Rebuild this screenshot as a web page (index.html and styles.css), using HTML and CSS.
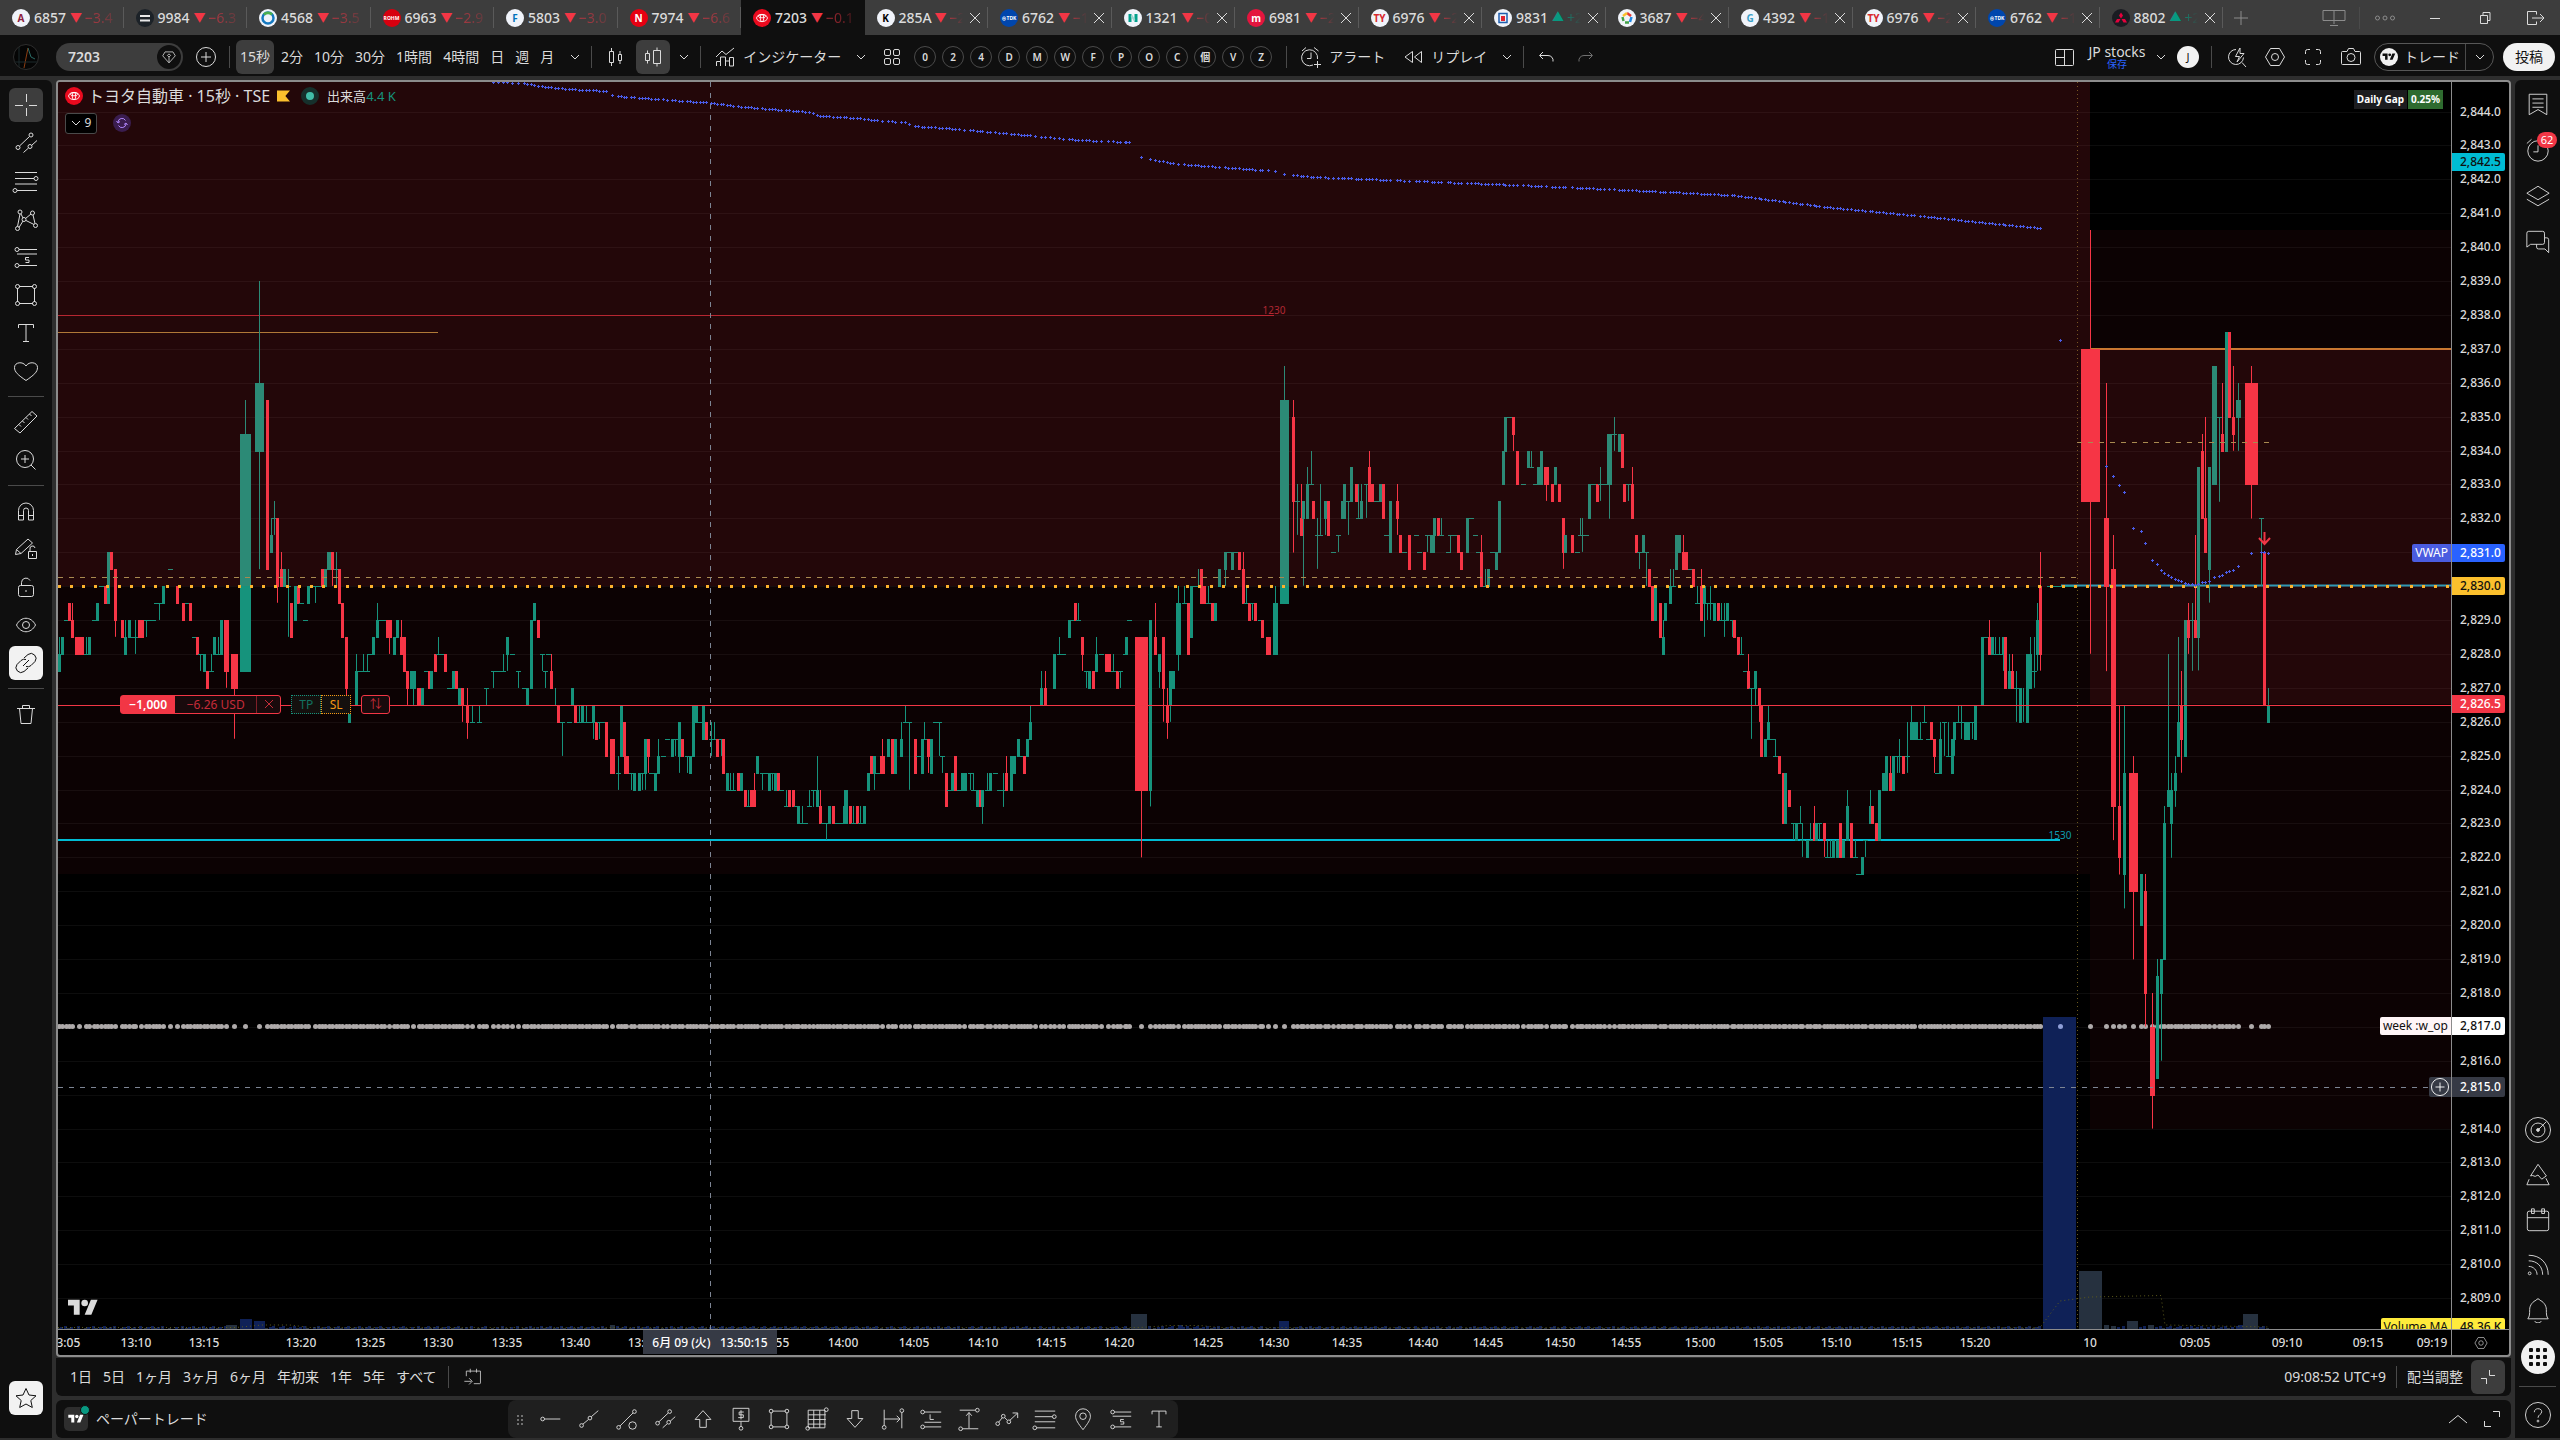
FILE: index.html
```html
<!DOCTYPE html>
<html lang="ja">
<head>
    <meta charset="UTF-8">
    <meta name="viewport" content="width=device-width, initial-scale=1.0">
    <title>7203 トヨタ自動車</title>
    <link rel="stylesheet" href="styles.css">
</head>
<body>
    <!-- アイコン定義 -->
    <svg class="sprite" aria-hidden="true">
        <symbol id="i-chevron" viewBox="0 0 10 10"><path d="M1 3l4 4 4-4"/></symbol>
        <symbol id="i-x" viewBox="0 0 10 10"><path d="M0 0l10 10M10 0L0 10"/></symbol>
        <symbol id="i-plus" viewBox="0 0 14 14"><path d="M7 0v14M0 7h14"/></symbol>
        <symbol id="i-pluscircle" viewBox="0 0 28 28"><circle cx="14" cy="14" r="9.5"/><path d="M14 9v10M9 14h10"/></symbol>
        <symbol id="i-monitor" viewBox="0 0 28 28"><path d="M3 6.500h22v10H3zM14 6.500V20M10 21.500h8"/></symbol>
        <symbol id="i-dots3" viewBox="0 0 28 28"><circle cx="6.500" cy="14" r="2"/><circle cx="14" cy="14" r="2"/><circle cx="21.500" cy="14" r="2"/></symbol>
        <symbol id="i-min" viewBox="0 0 28 28"><path d="M9 14.500h10"/></symbol>
        <symbol id="i-restore" viewBox="0 0 28 28"><path d="M9.500 11.500h7v8h-7zM12 11V8.500h7v8h-2.500"/></symbol>
        <symbol id="i-exit" viewBox="0 0 28 28"><path d="M15.500 7.500h-9v13h9M15.500 7.500v3M15.500 20.500v-3M11 14h12M19 10l4 4-4 4"/></symbol>
        <symbol id="i-gem" viewBox="0 0 28 28"><path d="M9 7.500h10l3 5-8 9-8-9zM14 21v-7M14 14l-2-2 2-2 2 2z"/></symbol>
        <symbol id="i-candles" viewBox="0 0 28 28"><path d="M8.500 8.500h4v11h-4zM10.500 5v3.500M10.500 19.500V23M17.500 11.500h3v6h-3zM19 8v3.500M19 17.500V21"/></symbol>
        <symbol id="i-volcandles" viewBox="0 0 28 28"><path d="M6.500 10.500h4v7h-4zM8.500 7.500v3M8.500 17.500v3M14.500 7.500h7v13h-7zM18 4.500v3M18 20.500v3"/></symbol>
        <symbol id="i-indicators" viewBox="0 0 28 28"><path d="M5.500 23V18.500h4V23M9.500 23v-9h5v9M14.500 23v-5h4v5M18.500 23V14.500h4V23zM5 14l6-6 4 3.500L23 5"/></symbol>
        <symbol id="i-grid4" viewBox="0 0 28 28"><rect x="6.500" y="6.500" width="6" height="6" rx="1.500"/><rect x="15.500" y="6.500" width="6" height="6" rx="1.500"/><rect x="6.500" y="15.500" width="6" height="6" rx="1.500"/><rect x="15.500" y="15.500" width="6" height="6" rx="1.500"/></symbol>
        <symbol id="i-alertadd" viewBox="0 0 28 28"><path d="M20.500 16a8 8 0 1 0-4.500 6M14 9.500v6h-4M5 8l4-3.500M17 4.500L21.500 8M20.500 18v7M17 21.500h7"/></symbol>
        <symbol id="i-replay" viewBox="0 0 28 28"><path d="M13.500 8.500L6 14l7.500 5.500zM22.500 8.500L15.500 14l7 5.500z"/></symbol>
        <symbol id="i-undo" viewBox="0 0 28 28"><path d="M10 9l-3.500 3.500L10 16M7 12.500h8a5 5 0 0 1 5 6"/></symbol>
        <symbol id="i-redo" viewBox="0 0 28 28"><path d="M18 9l3.500 3.500L18 16M21 12.500h-8a5 5 0 0 0-5 6"/></symbol>
        <symbol id="i-layout" viewBox="0 0 28 28"><rect x="5.500" y="6.500" width="18" height="16" rx="1"/><path d="M14.500 6.500v16M5.500 14.500h9"/></symbol>
        <symbol id="i-quick" viewBox="0 0 28 28"><path d="M13 6.500a7.500 7.500 0 1 0 7.500 8M19 19.500l4 4.500M17 5l-4.500 8.500h4L14 19l7-8.500h-4z"/></symbol>
        <symbol id="i-gear" viewBox="0 0 28 28"><path d="M9.500 5.500h9L23.500 14l-5 8.500h-9L4.500 14z"/><circle cx="14" cy="14" r="3.500"/></symbol>
        <symbol id="i-fullscreen" viewBox="0 0 28 28"><path d="M6.500 11V8.500a2 2 0 0 1 2-2H11M17 6.500h2.500a2 2 0 0 1 2 2V11M21.500 17v2.500a2 2 0 0 1-2 2H17M11 21.500H8.500a2 2 0 0 1-2-2V17"/></symbol>
        <symbol id="i-camera" viewBox="0 0 28 28"><path d="M5.500 8.500h4.500l1.500-3h5l1.500 3h4.500a1 1 0 0 1 1 1v11a1 1 0 0 1-1 1h-17a1 1 0 0 1-1-1v-11a1 1 0 0 1 1-1z"/><circle cx="14" cy="14.500" r="4"/></symbol>
        <symbol id="i-cross" viewBox="0 0 28 28"><path d="M14.500 3v8M14.500 17v8M3 14.500h8M17 14.500h8"/></symbol>
        <symbol id="i-trend" viewBox="0 0 28 28"><circle cx="6" cy="18.500" r="2"/><circle cx="19" cy="6" r="2"/><path d="M7.500 17L17.500 7.500M11.500 23.500l5-4.500M19.500 16.500l5.500-5"/><circle cx="18" cy="17.500" r="2"/></symbol>
        <symbol id="i-fib" viewBox="0 0 28 28"><path d="M3 5.500h22M3 11.500h19M3 17h22M5 23.500h20"/><circle cx="24" cy="11.500" r="2"/><circle cx="3" cy="23.500" r="2"/></symbol>
        <symbol id="i-pattern" viewBox="0 0 28 28"><circle cx="5.500" cy="23.500" r="2"/><circle cx="8" cy="7" r="2"/><circle cx="20.500" cy="8" r="2"/><circle cx="23.500" cy="20.500" r="2"/><circle cx="12" cy="14.500" r="2"/><path d="M5.500 21.500L8 9M9 9l2 4M13.500 13.500L19 9M21 10l2 8.500M14 15.500l8 4M7 22.500l4-6.500"/></symbol>
        <symbol id="i-forecast" viewBox="0 0 28 28"><path d="M7 6.500h18M5 11h20M7 22.500h18"/><circle cx="5" cy="6.500" r="2"/><circle cx="5" cy="22.500" r="2"/><path d="M17 14.500h-3.500v2.500H17v2.500h-3.500"/></symbol>
        <symbol id="i-rect" viewBox="0 0 28 28"><path d="M7 5.500h14M7 22.500h14M5.500 7v14M22.500 7v14"/><circle cx="5.500" cy="5.500" r="2"/><circle cx="22.500" cy="5.500" r="2"/><circle cx="5.500" cy="22.500" r="2"/><circle cx="22.500" cy="22.500" r="2"/></symbol>
        <symbol id="i-text" viewBox="0 0 28 28"><path d="M6.500 9V5.500h15V9M14 5.500v17M11 22.500h6"/></symbol>
        <symbol id="i-heart" viewBox="0 0 28 28"><path d="M14 23.500C6 18 2.500 15 2.500 10.500c0-5.500 8.500-6.500 11.500-1.500 3-5 11.500-4 11.500 1.500 0 4.500-3.500 7.500-11.500 13z"/></symbol>
        <symbol id="i-ruler" viewBox="0 0 28 28"><path d="M2.500 20.500L20 3.500l5 4.500L8 25zM7 16.500l2 2M10.500 13l2 2M14 9.500l2 2M17.500 6l2 2"/></symbol>
        <symbol id="i-zoom" viewBox="0 0 28 28"><circle cx="13" cy="13" r="8.500"/><path d="M19 19l4.500 4.500M13 9v8M9 13h8"/></symbol>
        <symbol id="i-magnet" viewBox="0 0 28 28"><path d="M6.500 23V13.500a7.500 7.500 0 0 1 15 0V23h-5v-9.500a2.500 2.500 0 0 0-5 0V23zM6.500 18.500h5M16.500 18.500h5"/></symbol>
        <symbol id="i-pencillock" viewBox="0 0 28 28"><path d="M3.500 19.500l1-5L16 4l4.500 4-11.500 10.500zM4.500 14.500L9 18.500M16.500 16.500h8v7h-8zM18 16.500v-2.500a2.500 2.500 0 0 1 5-1M20.500 19v2"/></symbol>
        <symbol id="i-lock" viewBox="0 0 28 28"><rect x="6.500" y="12.500" width="15" height="11" rx="2"/><path d="M9.500 12.500V9.500a4.500 4.500 0 0 1 8.500-2M14 17v2"/></symbol>
        <symbol id="i-eye" viewBox="0 0 28 28"><path d="M4.500 14C9 5 19 5 23.500 14 19 23 9 23 4.500 14z"/><circle cx="14" cy="14" r="3.500"/></symbol>
        <symbol id="i-link" viewBox="0 0 28 28"><path d="M12 9l4-3.500a5 5 0 0 1 7 7L19 16.500a5 5 0 0 1-5 1M16 19l-4 3.500a5 5 0 0 1-7-7L9 11.500a5 5 0 0 1 5-1M11 17l6-6"/></symbol>
        <symbol id="i-trash" viewBox="0 0 28 28"><path d="M5 8.500h18M10.500 8V5.500h7V8M7.500 8.500l1.500 15h10l1.500-15"/></symbol>
        <symbol id="i-star" viewBox="0 0 28 28"><path d="M14 4.500l3 6.500 7 .8-5.200 4.700 1.500 7L14 20l-6.300 3.500 1.500-7L4 11.800l7-.8z"/></symbol>
        <symbol id="i-watch" viewBox="0 0 28 28"><path d="M4.500 3.500h19v22L14 20l-9.500 5.500zM8 8.500h12M8 13h12M8 17.500h12"/></symbol>
        <symbol id="i-alarm" viewBox="0 0 28 28"><circle cx="14" cy="15" r="11"/><path d="M14 9v7h-5M2 7l5-4.500"/></symbol>
        <symbol id="i-layers" viewBox="0 0 28 28"><path d="M2 11l12-7.500L26 11l-12 7zM2 17.500l12 7 12-7"/></symbol>
        <symbol id="i-chat" viewBox="0 0 28 28"><path d="M2 19.500V4.500a2 2 0 0 1 2-2h15a2 2 0 0 1 2 2v10a2 2 0 0 1-2 2H6zM21.500 9.500h2a2 2 0 0 1 2 2v14l-4-4h-7a2 2 0 0 1-2-2v-3"/></symbol>
        <symbol id="i-radar" viewBox="0 0 28 28"><circle cx="14" cy="14" r="13.500"/><circle cx="14" cy="14" r="7.500"/><circle cx="14" cy="14" r="1.500" fill="currentColor"/><path d="M14 14l9-9"/></symbol>
        <symbol id="i-mountain" viewBox="0 0 28 28"><path d="M6 15L14 2.500 23 15l-5 3.500-4-4.500-3 1.500-3-1zM4.500 18.500L2 24.500h24l-3.500-7"/></symbol>
        <symbol id="i-calendar" viewBox="0 0 28 28"><rect x="2.500" y="4.500" width="23" height="21" rx="2"/><path d="M2.500 11.500h23M7 2h3v5H7zM18 2h3v5h-3z"/></symbol>
        <symbol id="i-feed" viewBox="0 0 28 28"><circle cx="5" cy="23" r="1.500"/><path d="M4 3.500c13 0 21 9 21 21M4 9.500c9 0 15 6 15 15M4 15.500c5 0 9 4 9 9"/></symbol>
        <symbol id="i-bell" viewBox="0 0 28 28"><path d="M3 23.500c2-2.500 2-5 2-10S9 4.500 12 3.500c.5-2 3.500-2 4 0 3 1 7 5 7 10s0 7.500 2 10zM10.500 26c1 2.500 6 2.500 7 0"/></symbol>
        <symbol id="i-help" viewBox="0 0 28 28"><circle cx="14" cy="14" r="13.500"/><path d="M10 11c0-5 8-5 8-.5 0 3-4 3-4 6.500"/><circle cx="14" cy="20.500" r="1"/></symbol>
        <symbol id="i-goto" viewBox="0 0 28 28"><path d="M5.500 13V6.500h18v15a1 1 0 0 1-1 1H15M10.500 3.500v5M18.500 3.500v5M3 19.500h9M9 15.500l4 4-4 4"/></symbol>
        <symbol id="i-shrink" viewBox="0 0 28 28"><path d="M15.500 7v5.500H21M7 15.500h5.500V21"/></symbol>
        <symbol id="i-expand" viewBox="0 0 28 28"><path d="M15 6.500h6.500V12M6.500 16v5.500H13"/></symbol>
        <symbol id="i-up" viewBox="0 0 28 28"><path d="M5 18l9-7.500 9 7.500"/></symbol>
        <symbol id="i-hray" viewBox="0 0 28 28"><circle cx="5" cy="14" r="2"/><path d="M7 14h17"/></symbol>
        <symbol id="i-line" viewBox="0 0 28 28"><circle cx="6" cy="21" r="2"/><circle cx="15" cy="13" r="2"/><path d="M7.500 19.500l6-5M16.500 11.500L24 5"/></symbol>
        <symbol id="i-lineshape" viewBox="0 0 28 28"><circle cx="5" cy="23" r="2"/><circle cx="22" cy="6" r="2"/><path d="M6.500 21.500L20.500 7.500"/><circle cx="20" cy="21" r="4"/></symbol>
        <symbol id="i-arrowup" viewBox="0 0 28 28"><path d="M14 5l8.500 9.500h-5V23h-7v-8.500h-5z"/></symbol>
        <symbol id="i-arrowdown" viewBox="0 0 28 28"><path d="M14 23l8.500-9.500h-5V5h-7v8.500h-5z"/></symbol>
        <symbol id="i-note" viewBox="0 0 28 28"><path d="M5.500 2.500h17v14h-17zM14 16.500V22M17 6.500h-5v3h4.500v3H11M14 4.500v10"/><circle cx="14" cy="24" r="2"/></symbol>
        <symbol id="i-table" viewBox="0 0 28 28"><path d="M4.500 4.500h18v19h-18zM4.500 9.500h19M4.500 14.500h19M4.500 19.500h19M10.500 4.500v19M17 4.500v19"/><circle cx="24" cy="4" r="2"/><circle cx="4" cy="24" r="2"/></symbol>
        <symbol id="i-daterange" viewBox="0 0 28 28"><path d="M4.500 4v17M23.500 7v17M4.500 14h17M18 10.500l3.500 3.500-3.500 3.500"/><circle cx="4.500" cy="23" r="2"/><circle cx="23.500" cy="5" r="2"/></symbol>
        <symbol id="i-long" viewBox="0 0 28 28"><path d="M7 6.500h18M7 17.500h18M7 22.500h18M13 9v5.500h4"/><circle cx="5" cy="6.500" r="2"/><circle cx="5" cy="22.500" r="2"/></symbol>
        <symbol id="i-pricerange" viewBox="0 0 28 28"><path d="M4 4.500h17M7 24.500h17M14 7v17M11 10.500L14 7l3 3.500"/><circle cx="23" cy="4.500" r="2"/><circle cx="5" cy="24.500" r="2"/></symbol>
        <symbol id="i-path" viewBox="0 0 28 28"><circle cx="4" cy="19" r="2"/><circle cx="10" cy="11" r="2"/><circle cx="16" cy="17" r="2"/><path d="M5 17.500L9 12.500M11.500 12.500l3 3M17 15.500L25 8M20 7.500h5.500V13"/></symbol>
        <symbol id="i-pin" viewBox="0 0 28 28"><path d="M14 25.500C9 19 6 15 6 11a8 8 0 0 1 16 0c0 4-3 8-8 14.500z"/><circle cx="14" cy="11" r="3.500"/></symbol>
        <symbol id="i-tv" viewBox="0 0 36 28"><path d="M14 22H7V11H0V4h14zM28 22h-8l7.500-18h8z" fill="currentColor" stroke="none"/><circle cx="20" cy="8" r="4" fill="currentColor" stroke="none"/></symbol>
        <symbol id="i-toyota" viewBox="0 0 20 20"><circle cx="10" cy="10" r="10" fill="#eb0a1e" stroke="none"/><ellipse cx="10" cy="10" rx="6" ry="4" stroke="#fff"/><ellipse cx="10" cy="10" rx="2" ry="4" stroke="#fff"/><ellipse cx="10" cy="8" rx="4" ry="1.800" stroke="#fff"/></symbol>
        <symbol id="i-9984" viewBox="0 0 18 18"><circle cx="9" cy="9" r="9" fill="#1c2228" stroke="none"/><path d="M4 7h10M4 11.500h10" stroke="#e8e8e8" stroke-width="2"/></symbol>
        <symbol id="i-4568" viewBox="0 0 18 18"><circle cx="9" cy="9" r="9" fill="#f0f3fa" stroke="none"/><circle cx="9" cy="9" r="5.500" stroke="#1679c0" stroke-width="2.500"/><path d="M5 5.500a6 6 0 0 1 8 0" stroke="#4caf50" stroke-width="3"/></symbol>
        <symbol id="i-1321" viewBox="0 0 18 18"><circle cx="9" cy="9" r="9" fill="#f0f3fa" stroke="none"/><path d="M6 5v8M12 5v8" stroke="#00a08c" stroke-width="3"/><path d="M7.500 6.500l3 5" stroke="#9bd6cf" stroke-width="2"/></symbol>
        <symbol id="i-9831" viewBox="0 0 18 18"><circle cx="9" cy="9" r="9" fill="#f0f3fa" stroke="none"/><rect x="5" y="4.500" width="8" height="9" stroke="#1f5fae" stroke-width="1.500"/><rect x="7" y="7" width="4" height="5" fill="#e0242f" stroke="none"/></symbol>
        <symbol id="i-3687" viewBox="0 0 18 18"><circle cx="9" cy="9" r="9" fill="#f0f3fa" stroke="none"/><path d="M9 4l4 3" stroke="#e53935" stroke-width="2.500"/><path d="M13.500 8l-1.500 5" stroke="#1e88e5" stroke-width="2.500"/><path d="M11 13.500H7" stroke="#43a047" stroke-width="2.500"/><path d="M5.500 12L4.500 8" stroke="#43a047" stroke-width="2.500"/><path d="M5 7l4-3" stroke="#fbc02d" stroke-width="2.500"/></symbol>
        <symbol id="i-8802" viewBox="0 0 18 18"><circle cx="9" cy="9" r="9" fill="#1a1c22" stroke="none"/><path d="M9 3.500l2 3-2 3-2-3zM8.500 10l-2 3.500H3L5 10zM9.500 10l2 3.500H15L13 10z" fill="#e6003c" stroke="none"/></symbol>
    </svg>

    <header class="topbar">
        <nav class="tabs" id="tabs"></nav>
        <div class="window-controls">
            <button class="wc wc-add" aria-label="新しいタブ"><svg class="ic14"><use href="#i-plus"/></svg></button>
            <button class="wc wc-dim" aria-label="モニター"><svg class="ic"><use href="#i-monitor"/></svg></button>
            <span class="vsep"></span>
            <button class="wc wc-dim" aria-label="メニュー"><svg class="ic"><use href="#i-dots3"/></svg></button>
            <button class="wc" aria-label="最小化"><svg class="ic"><use href="#i-min"/></svg></button>
            <button class="wc" aria-label="元に戻す"><svg class="ic"><use href="#i-restore"/></svg></button>
            <button class="wc" aria-label="終了"><svg class="ic"><use href="#i-exit"/></svg></button>
        </div>
    </header>

    <div class="toolbar">
        <button class="avatar" aria-label="メニュー"><svg viewBox="0 0 26 26" class="ic26"><path d="M11 24l2-10 2-10" stroke="#8a3c12"/><path d="M15 4l3 9 4 2" stroke="#2a6a64"/><path d="M0 18h26M6 0v26" stroke="#1d2a2c"/></svg></button>
        <div class="search">
            <input type="text" value="7203" aria-label="シンボル検索">
            <button class="gem" aria-label="市場"><svg class="ic22"><use href="#i-gem"/></svg></button>
        </div>
        <button class="tb-plus" aria-label="比較"><svg class="ic"><use href="#i-pluscircle"/></svg></button>
        <span class="vsep first"></span>
        <div class="group intervals">
            <button class="tb active">15秒</button>
            <button class="tb">2分</button>
            <button class="tb">10分</button>
            <button class="tb">30分</button>
            <button class="tb">1時間</button>
            <button class="tb">4時間</button>
            <button class="tb">日</button>
            <button class="tb">週</button>
            <button class="tb">月</button>
            <button class="tb-chev" aria-label="時間足"><svg class="ic10"><use href="#i-chevron"/></svg></button>
        </div>
        <span class="vsep"></span>
        <div class="group">
            <button class="tb-icon" aria-label="ローソク足"><svg class="ic"><use href="#i-candles"/></svg></button>
            <button class="tb-icon active" aria-label="出来高ローソク足"><svg class="ic"><use href="#i-volcandles"/></svg></button>
            <button class="tb-chev" aria-label="チャートタイプ"><svg class="ic10"><use href="#i-chevron"/></svg></button>
        </div>
        <span class="vsep"></span>
        <div class="group">
            <button class="tb with-icon"><svg class="ic"><use href="#i-indicators"/></svg>インジケーター</button>
            <button class="tb-chev" aria-label="お気に入り"><svg class="ic10"><use href="#i-chevron"/></svg></button>
            <button class="tb-icon" aria-label="テンプレート"><svg class="ic"><use href="#i-grid4"/></svg></button>
        </div>
        <div class="rounds">
            <button>0</button><button>2</button><button>4</button><button>D</button><button>M</button><button>W</button><button>F</button><button>P</button><button>O</button><button>C</button><button>個</button><button>V</button><button>Z</button>
        </div>
        <span class="vsep"></span>
        <div class="group">
            <button class="tb with-icon"><svg class="ic"><use href="#i-alertadd"/></svg>アラート</button>
            <button class="tb with-icon"><svg class="ic"><use href="#i-replay"/></svg>リプレイ</button>
            <button class="tb-chev" aria-label="リプレイ設定"><svg class="ic10"><use href="#i-chevron"/></svg></button>
        </div>
        <span class="vsep"></span>
        <div class="group">
            <button class="tb-icon" aria-label="元に戻す"><svg class="ic"><use href="#i-undo"/></svg></button>
            <button class="tb-icon dim" aria-label="やり直す"><svg class="ic"><use href="#i-redo"/></svg></button>
        </div>
        <div class="toolbar-right">
            <button class="tb-wide" aria-label="レイアウト"><svg class="ic"><use href="#i-layout"/></svg></button>
            <button class="layout-name"><span>JP stocks</span><span class="save">保存</span></button>
            <button class="tb-chev" aria-label="レイアウト管理"><svg class="ic10"><use href="#i-chevron"/></svg></button>
            <span class="user">J</span>
            <span class="vsep"></span>
            <button class="tb-wide" aria-label="クイック検索"><svg class="ic"><use href="#i-quick"/></svg></button>
            <button class="tb-wide" aria-label="設定"><svg class="ic"><use href="#i-gear"/></svg></button>
            <button class="tb-wide" aria-label="全画面"><svg class="ic"><use href="#i-fullscreen"/></svg></button>
            <button class="tb-wide" aria-label="スナップショット"><svg class="ic"><use href="#i-camera"/></svg></button>
            <div class="trade">
                <button class="trade-main"><span class="tv-dot"><svg class="ic12"><use href="#i-tv"/></svg></span>トレード</button>
                <button class="trade-chev" aria-label="ブローカー"><svg class="ic10"><use href="#i-chevron"/></svg></button>
            </div>
            <button class="publish">投稿</button>
        </div>
    </div>

    <div class="workspace">
        <aside class="left-tools">
            <button class="active" aria-label="カーソル"><svg class="ic"><use href="#i-cross"/></svg></button>
            <button aria-label="トレンドライン"><svg class="ic"><use href="#i-trend"/></svg></button>
            <button aria-label="フィボナッチ"><svg class="ic"><use href="#i-fib"/></svg></button>
            <button aria-label="パターン"><svg class="ic"><use href="#i-pattern"/></svg></button>
            <button aria-label="予測"><svg class="ic"><use href="#i-forecast"/></svg></button>
            <button aria-label="図形"><svg class="ic"><use href="#i-rect"/></svg></button>
            <button aria-label="テキスト"><svg class="ic"><use href="#i-text"/></svg></button>
            <button aria-label="アイコン"><svg class="ic"><use href="#i-heart"/></svg></button>
            <hr>
            <button aria-label="計測"><svg class="ic"><use href="#i-ruler"/></svg></button>
            <button aria-label="ズーム"><svg class="ic"><use href="#i-zoom"/></svg></button>
            <hr>
            <button aria-label="マグネット"><svg class="ic"><use href="#i-magnet"/></svg></button>
            <button aria-label="描画モード"><svg class="ic"><use href="#i-pencillock"/></svg></button>
            <button aria-label="ロック"><svg class="ic"><use href="#i-lock"/></svg></button>
            <button aria-label="表示"><svg class="ic"><use href="#i-eye"/></svg></button>
            <button class="inverse" aria-label="同期"><svg class="ic"><use href="#i-link"/></svg></button>
            <hr>
            <button aria-label="削除"><svg class="ic"><use href="#i-trash"/></svg></button>
            <button class="inverse fav" aria-label="お気に入り"><svg class="ic"><use href="#i-star"/></svg></button>
        </aside>

        <main class="center">
            <section class="chart">
                <div class="plot" id="plot">
                    <svg id="canvas" viewBox="58 82 2393 1247" preserveAspectRatio="none"></svg>
                    <div class="legend">
                        <div class="legend-row">
                            <svg class="ic18"><use href="#i-toyota"/></svg>
                            <span class="symbol">トヨタ自動車 · 15秒 · TSE</span>
                            <svg class="flag" viewBox="0 0 14 12"><path d="M0 0h14l-5 6 5 6H0z" fill="#fbc02d" stroke="none"/></svg>
                            <span class="market"></span>
                            <span class="vol">出来高<b>4.4 K</b></span>
                        </div>
                        <div class="legend-row">
                            <button class="fold"><svg class="ic10"><use href="#i-chevron"/></svg>9</button>
                            <span class="sync"><svg class="ic18" viewBox="0 0 18 18"><path d="M5 8a4 4 0 0 1 7.500-1.500M13 10a4 4 0 0 1-7.500 1.500M3.500 7l1.500 2 2-1.500M14.500 11L13 9l-2 1.500"/></svg></span>
                        </div>
                    </div>
                    <div class="gap"><span>Daily Gap</span><span class="gap-value">0.25%</span></div>
                    <div class="position">
                        <div class="pos-box"><span class="qty">−1,000</span><span class="pnl">−6.26 USD</span><button aria-label="決済"><svg class="ic8"><use href="#i-x"/></svg></button></div>
                        <div class="brackets"><button class="tp">TP</button><button class="sl">SL</button></div>
                        <button class="reverse">⇅</button>
                    </div>
                    <svg class="watermark"><use href="#i-tv"/></svg>
                </div>
                <div class="price-axis" id="prices"></div>
                <div class="time-axis" id="times"></div>
                <button class="axis-gear" aria-label="スケール設定"><svg class="ic18"><use href="#i-gear"/></svg></button>
            </section>

            <section class="range-bar">
                <button>1日</button><button>5日</button><button>1ヶ月</button><button>3ヶ月</button><button>6ヶ月</button><button>年初来</button><button>1年</button><button>5年</button><button>すべて</button>
                <span class="vsep"></span>
                <button class="goto" aria-label="日付へ移動"><svg class="ic22"><use href="#i-goto"/></svg></button>
                <div class="range-right">
                    <button>09:08:52 UTC+9</button>
                    <span class="vsep"></span>
                    <button>配当調整</button>
                    <button class="shrink" aria-label="縮小"><svg class="ic"><use href="#i-shrink"/></svg></button>
                </div>
            </section>

            <footer class="footer">
                <button class="paper"><span class="paper-logo"><svg class="ic16"><use href="#i-tv"/></svg></span>ペーパートレード</button>
                <div class="draw-bar">
                    <span class="grip"></span>
                    <button aria-label="水平レイ"><svg class="ic"><use href="#i-hray"/></svg></button>
                    <button aria-label="ライン"><svg class="ic"><use href="#i-line"/></svg></button>
                    <button aria-label="ラインと図形"><svg class="ic"><use href="#i-lineshape"/></svg></button>
                    <button aria-label="チャネル"><svg class="ic"><use href="#i-trend"/></svg></button>
                    <button aria-label="上矢印"><svg class="ic"><use href="#i-arrowup"/></svg></button>
                    <button aria-label="価格ノート"><svg class="ic"><use href="#i-note"/></svg></button>
                    <button aria-label="長方形"><svg class="ic"><use href="#i-rect"/></svg></button>
                    <button aria-label="表"><svg class="ic"><use href="#i-table"/></svg></button>
                    <button aria-label="下矢印"><svg class="ic"><use href="#i-arrowdown"/></svg></button>
                    <button aria-label="日付範囲"><svg class="ic"><use href="#i-daterange"/></svg></button>
                    <button aria-label="ロング"><svg class="ic"><use href="#i-long"/></svg></button>
                    <button aria-label="価格範囲"><svg class="ic"><use href="#i-pricerange"/></svg></button>
                    <button aria-label="パス"><svg class="ic"><use href="#i-path"/></svg></button>
                    <button aria-label="リトレースメント"><svg class="ic"><use href="#i-fib"/></svg></button>
                    <button aria-label="ピン"><svg class="ic"><use href="#i-pin"/></svg></button>
                    <button aria-label="ショート"><svg class="ic"><use href="#i-forecast"/></svg></button>
                    <button aria-label="テキスト"><svg class="ic"><use href="#i-text"/></svg></button>
                </div>
                <div class="footer-right">
                    <button aria-label="開く"><svg class="ic"><use href="#i-up"/></svg></button>
                    <button aria-label="最大化"><svg class="ic"><use href="#i-expand"/></svg></button>
                </div>
            </footer>
        </main>

        <aside class="right-tools">
            <button aria-label="ウォッチリスト"><svg class="ic"><use href="#i-watch"/></svg></button>
            <button aria-label="アラート"><svg class="ic"><use href="#i-alarm"/></svg><span class="badge">62</span></button>
            <button aria-label="オブジェクトツリー"><svg class="ic"><use href="#i-layers"/></svg></button>
            <button aria-label="チャット"><svg class="ic"><use href="#i-chat"/></svg></button>
            <div class="right-bottom">
                <button aria-label="スクリーナー"><svg class="ic"><use href="#i-radar"/></svg></button>
                <button aria-label="パイン"><svg class="ic"><use href="#i-mountain"/></svg></button>
                <button aria-label="カレンダー"><svg class="ic"><use href="#i-calendar"/></svg></button>
                <button aria-label="ニュース"><svg class="ic"><use href="#i-feed"/></svg></button>
                <button aria-label="通知"><svg class="ic"><use href="#i-bell"/></svg></button>
                <button class="apps" aria-label="アプリ"><span></span><span></span><span></span><span></span><span></span><span></span><span></span><span></span><span></span></button>
                <hr>
                <button aria-label="ヘルプ"><svg class="ic"><use href="#i-help"/></svg></button>
            </div>
        </aside>
    </div>

    <script src="chart.js"></script>
</body>
</html>
```
FILE: styles.css
```css
* { box-sizing: border-box; }
html, body { height: 100%; }
body {
    margin: 0;
    padding-bottom: 2px;
    display: flex;
    flex-direction: column;
    background: #2e2e2e;
    color: #dbdbdb;
    font-family: "Noto Sans", "Noto Sans CJK JP", sans-serif;
    font-size: 14px;
    line-height: 20px;
    overflow: hidden;
}
button {
    background: none;
    border: none;
    padding: 0;
    margin: 0;
    color: inherit;
    font: inherit;
    white-space: nowrap;
    cursor: pointer;
    display: flex;
    align-items: center;
    justify-content: center;
}
svg { fill: none; stroke: currentColor; display: block; flex: none; }
.sprite { position: absolute; width: 0; height: 0; }
.ic { width: 28px; height: 28px; }
.ic26 { width: 26px; height: 26px; }
.ic22 { width: 22px; height: 22px; }
.ic18 { width: 18px; height: 18px; }
.ic16 { width: 16px; height: 12px; }
.ic14 { width: 14px; height: 14px; }
.ic12 { width: 14px; height: 10px; }
.ic10 { width: 10px; height: 10px; }
.ic8 { width: 8px; height: 8px; }
.vsep { width: 1px; height: 22px; background: #4a4a4a; flex: none; margin: 0 6px; }

/* タブ */
.topbar { display: flex; height: 35px; background: #3d3d3d; flex: none; }
.tabs { flex: 1; display: flex; min-width: 0; }
.tab {
    flex: 1 1 0;
    min-width: 0;
    display: flex;
    align-items: center;
    padding-left: 12px;
    color: #dbdbdb;
    text-decoration: none;
    position: relative;
    overflow: hidden;
}
.tab::after {
    content: "";
    position: absolute;
    right: 0;
    top: 7px;
    height: 21px;
    border-right: 1px solid #5a5a5a;
}
.tab.current { background: #0f0f0f; }
.tab.current::after { display: none; }
.tab .logo {
    width: 18px;
    height: 18px;
    border-radius: 50%;
    font-size: 10px;
    font-weight: 700;
    line-height: 18px;
    text-align: center;
    overflow: hidden;
    flex: none;
}
.tab .logo.small { font-size: 5px; }
.tab .code { margin-left: 4px; width: 35px; font-weight: 500; flex: none; }
.tab .arrow { color: #f23645; font-size: 12px; width: 14px; flex: none; text-align: center; }
.tab .arrow.up { color: #089981; }
.tab .pct {
    color: #f23645;
    flex: 1;
    margin-left: 2px;
    overflow: hidden;
    opacity: 0.7;
    -webkit-mask-image: linear-gradient(90deg, #000, transparent);
    mask-image: linear-gradient(90deg, #000, transparent);
}
.tab .pct.up { color: #089981; }
.tab button { width: 24px; margin-right: 1px; flex: none; }
.window-controls { display: flex; align-items: center; width: 337px; flex: none; }
.wc { width: 50px; height: 35px; flex: none; }
.wc-add { width: 36px; color: #8c8c8c; margin-right: auto; }
.wc-dim { color: #8c8c8c; }
.window-controls .vsep { margin: 0; }

/* ツールバー */
.toolbar {
    display: flex;
    align-items: center;
    height: 41px;
    flex: none;
    background: #0f0f0f;
    padding: 3px 5px 0 13px;
    margin-bottom: 4px;
}
.avatar { width: 26px; height: 26px; border-radius: 50%; overflow: hidden; background: #050505; border: 1px solid #2e2e2e; }
.search {
    display: flex;
    align-items: center;
    width: 127px;
    height: 28px;
    margin-left: 17px;
    border-radius: 14px;
    background: #3d3d3d;
    padding: 0 2px 0 12px;
}
.search input {
    flex: 1;
    min-width: 0;
    background: none;
    border: none;
    outline: none;
    padding: 0;
    color: #dbdbdb;
    font: inherit;
    font-weight: 600;
}
.gem { width: 24px; height: 24px; border-radius: 50%; background: #0f0f0f; }
.tb-plus { width: 46px; }
.vsep.first { margin-left: 0; }
.group { display: flex; align-items: center; gap: 4px; }
.intervals { gap: 3px; }
.tb { height: 34px; padding: 0 4px; border-radius: 6px; }
.tb-icon { width: 34px; height: 34px; border-radius: 6px; }
.tb-wide { width: 38px; height: 34px; }
.tb-chev { width: 20px; height: 34px; }
.intervals .tb-chev { margin-left: 4px; }
.tb.active, .tb-icon.active { background: #3d3d3d; }
.with-icon { gap: 4px; padding-right: 6px; }
.dim { color: #707070; }
.rounds { display: flex; gap: 6px; margin: 0 8px 0 5px; }
.rounds button {
    width: 22px;
    height: 22px;
    border: 1px solid #4a4a4a;
    border-radius: 50%;
    font-size: 10px;
    font-weight: 600;
}
.toolbar-right { display: flex; align-items: center; margin-left: auto; }
.layout-name { flex-direction: column; width: 68px; line-height: 13px; }
.layout-name .save { color: #2962ff; font-size: 10px; line-height: 12px; }
.user {
    width: 22px;
    height: 22px;
    border-radius: 50%;
    background: #f2f2f2;
    color: #0f0f0f;
    font-size: 11px;
    line-height: 22px;
    text-align: center;
    margin: 0 6px;
}
.trade { display: flex; height: 28px; width: 120px; border: 1px solid #575757; border-radius: 14px; margin-left: 4px; }
.trade-main { flex: 1; gap: 6px; }
.tv-dot { width: 18px; height: 18px; border-radius: 50%; background: #f2f2f2; color: #0f0f0f; display: flex; align-items: center; justify-content: center; }
.trade-chev { width: 28px; border-left: 1px solid #4a4a4a; }
.publish { width: 52px; height: 28px; border-radius: 14px; background: #f2f2f2; color: #0f0f0f; margin-left: 9px; }

/* ワークスペース */
.workspace { flex: 1; min-height: 0; display: flex; gap: 4px; }
.left-tools {
    width: 52px;
    flex: none;
    background: #0f0f0f;
    border-top-right-radius: 6px;
    padding: 8px 9px 23px;
    display: flex;
    flex-direction: column;
    gap: 4px;
}
.left-tools button { height: 34px; border-radius: 6px; flex: none; }
.left-tools .active { background: #3d3d3d; }
.left-tools .inverse { background: #f2f2f2; color: #0f0f0f; }
.left-tools .fav { margin-top: auto; }
.left-tools hr { width: 36px; margin: 4px -1px; }
hr { border: none; height: 1px; background: #4a4a4a; flex: none; }
.right-tools {
    width: 45px;
    flex: none;
    background: #0f0f0f;
    border-top-left-radius: 6px;
    padding: 5px 4px 4px;
    display: flex;
    flex-direction: column;
    gap: 8px;
}
.right-tools .ic { width: 26px; height: 26px; }
.right-tools button { height: 38px; position: relative; flex: none; }
.badge {
    position: absolute;
    top: 1px;
    right: -1px;
    min-width: 20px;
    height: 16px;
    border-radius: 8px;
    background: #f23645;
    color: #fff;
    font-size: 11px;
    line-height: 16px;
}
.right-bottom { margin-top: auto; display: flex; flex-direction: column; gap: 7px; }
.right-bottom hr { width: 100%; margin: 2px 0; }
.right-tools .apps {
    width: 34px;
    height: 34px;
    margin: 4px 0 3px 2px;
    border-radius: 50%;
    background: #f2f2f2;
    display: grid;
    grid-template-columns: repeat(3, 4px);
    gap: 3px;
    align-content: center;
    justify-content: center;
}
.apps span { width: 4px; height: 4px; background: #0f0f0f; border-radius: 1px; }
.center { flex: 1; min-width: 0; display: flex; flex-direction: column; }

/* チャート */
.chart {
    flex: 1;
    min-height: 0;
    display: grid;
    grid-template-columns: 1fr 58px;
    grid-template-rows: 1fr 26px;
    background: #000;
    border: 2px solid #8c8c8c;
    border-radius: 4px;
    overflow: hidden;
}
.plot { position: relative; min-height: 0; overflow: hidden; }
#canvas { position: absolute; width: 100%; height: 100%; stroke: none; }
.price-axis { position: relative; border-left: 1px solid #8c8c8c; overflow: hidden; font-size: 12px; }
.time-axis { position: relative; border-top: 1px solid #8c8c8c; overflow: hidden; font-size: 12px; font-weight: 500; }
.axis-gear { border-left: 1px solid #8c8c8c; border-top: 1px solid #8c8c8c; }
.price, .tag {
    position: absolute;
    left: 0;
    width: 53px;
    padding-left: 8px;
    height: 18px;
    margin-top: -9px;
    line-height: 18px;
    border-radius: 0 2px 2px 0;
    font-weight: 500;
}
.tag { color: #fff; }
.tag-cyan { background: #00bcd4; color: #0f0f0f; }
.tag-blue { background: #2962ff; }
.tag-amber { background: #fbc02d; color: #0f0f0f; }
.tag-red { background: #f23645; }
.tag-white { background: #fff; color: #0f0f0f; }
.tag-gray { background: #363a45; height: 20px; margin-top: -10px; line-height: 20px; }
.tag-yellow { background: #ffeb3b; color: #0f0f0f; }
.side {
    position: absolute;
    right: 0;
    height: 18px;
    margin-top: -9px;
    padding: 0 3px;
    font-size: 12px;
    line-height: 18px;
    border-radius: 2px 0 0 2px;
}
.side-vwap { background: #4a5ce0; color: #fff; }
.side-week { background: #fff5f7; color: #0f0f0f; }
.side-vol { background: #ffeb3b; color: #0f0f0f; }
.side-add { background: #363a45; color: #fff; height: 20px; margin-top: -10px; padding: 0 2px; display: flex; align-items: center; }
.level { position: absolute; width: 40px; margin: -13px 0 0 -20px; text-align: center; font-size: 10px; line-height: 12px; }
.level-high { color: #b22833; }
.level-low { color: #0f9bb0; }
.time { position: absolute; top: 3px; width: 60px; margin-left: -30px; text-align: center; }
.time-cursor {
    position: absolute;
    top: 0;
    height: 24px;
    width: 134px;
    margin-left: -67px;
    line-height: 26px;
    background: #363a45;
    color: #fff;
    text-align: center;
    white-space: pre;
}

.legend { position: absolute; left: 7px; top: 3px; display: flex; flex-direction: column; gap: 5px; }
.legend-row { display: flex; align-items: center; height: 22px; }
.symbol { font-size: 16px; margin: 0 7px 0 5px; }
.flag { width: 13px; height: 12px; }
.market { width: 18px; height: 18px; border-radius: 50%; background: #42bda8; border: 5px solid #16302c; margin: 0 8px 0 11px; }
.vol { font-size: 13px; }
.vol b { font-weight: 400; color: #16937c; }
.fold { width: 32px; height: 21px; gap: 4px; background: #000; border: 1px solid #4a4a4a; border-radius: 3px; font-size: 12px; }
.sync { margin-left: 16px; color: #b388ff; background: #3a1d4e; border-radius: 50%; }
.gap { position: absolute; right: 8px; top: 8px; display: flex; gap: 1px; font-size: 10px; font-weight: 700; line-height: 19px; color: #fff; }
.gap span { background: #1c1c1f; padding: 0 3px; }
.gap .gap-value { background: #2e6b2f; }
.position { position: absolute; left: 2.6%; top: 50%; margin-top: -11px; display: flex; align-items: center; gap: 10px; font-size: 12px; line-height: 17px; }
.pos-box, .reverse { display: flex; border: 1px solid #f23645; border-radius: 3px; background: #190a0c; color: #c62c3a; }
.qty { background: #f23645; color: #fff; font-weight: 600; width: 54px; text-align: center; }
.pnl { width: 81px; text-align: center; }
.pos-box button { width: 24px; border-left: 1px solid #801f28; color: #f23645; }
.brackets { display: flex; background: #14100e; }
.brackets button { width: 30px; border: 1px dotted #16937c; color: #12705f; line-height: 17px; }
.brackets .sl { border-color: #f59714; color: #f59714; }
.reverse { width: 29px; height: 19px; }
.watermark { position: absolute; left: 10px; bottom: 9px; width: 30px; height: 24px; color: #dbdbdb; }

/* 下部バー */
.range-bar {
    display: flex;
    align-items: center;
    gap: 11px;
    height: 38px;
    margin-top: 1px;
    padding: 0 6px 0 14px;
    background: #0f0f0f;
    border-radius: 0 0 6px 6px;
    flex: none;
}
.goto { margin-left: 2px; }
.range-bar .vsep { margin: 0; }
.range-right { display: flex; align-items: center; gap: 10px; margin-left: auto; }
.range-right .shrink { width: 34px; height: 34px; border-radius: 6px; background: #3d3d3d; margin-left: -2px; }
.footer {
    display: flex;
    align-items: center;
    height: 38px;
    margin-top: 4px;
    padding: 0 5px 0 8px;
    background: #0f0f0f;
    border-radius: 6px;
    position: relative;
    flex: none;
}
.paper { gap: 8px; }
.paper-logo { width: 24px; height: 24px; border-radius: 5px; background: #2e2e2e; color: #fff; display: flex; align-items: center; justify-content: center; position: relative; }
.paper-logo::after { content: ""; position: absolute; right: -2px; top: -2px; width: 8px; height: 8px; border-radius: 50%; background: #089981; border: 1px solid #0f0f0f; }
.draw-bar { display: flex; align-items: center; height: 38px; padding: 0 0 0 8px; background: #1f1f1f; border-radius: 8px; margin-left: 300px; }
.draw-bar button { width: 38px; height: 34px; }
.draw-bar .ic { width: 26px; height: 26px; }
.grip { width: 8px; height: 11px; margin-right: 8px; background: radial-gradient(circle, #707070 1px, transparent 1px) 0 0 / 4px 4px; }
.footer-right { display: flex; gap: 6px; margin-left: auto; }
```
FILE: chart.js
```js
const NS = 'http://www.w3.org/2000/svg';
const VIEW = { x: 58, y: 82, w: 2393, h: 1247 };
const canvas = document.getElementById('canvas');
const plot = document.getElementById('plot');

// 価格 → y座標
const py = p => 111.5 + (44 - p) * 33.9;

// x, 始値, 終値, [高値, 安値, 幅]  (価格は 2800 を引いた値)
const raw = `
59 27.5 28 28.5 27.5,62 28 28.5,66 29 29,69 29.5 29,72 29 28.5 29.5 28.5,79 28.5 28 28.5 28 9,86 28 28 28.5 28,89 28 28.5,94 29 29,97 29 29.5,101 30 30,105 30 29.5,108 29.5 31,111 31 30.5,115 30.5 29 30.5 28.5,122 29 28.5,125 28 28.5 29 28,129 28.5 29,133 28.5 28.5,135 28.5 28.5 29 28,141 29 28.5 29 28.5 6,146 29 29 29 28.5,149 29 29,153 29 29,156 29.5 29.5,159 29.5 29.5 29.5 29,163 29.5 30,170 30.5 30.5,177 30 29.5,183 29.5 29,187 29.5 29.5,190 29.5 29,194 28.5 28.5,197 28.5 28,200 28 28 28 27.5,204 27.5 28,207 27.5 27,211 27.5 27.5 28 27.5,214 28 28.5,218 28 28 28.5 28,221 28 29,226 29 27.5 29 27 5,234 28 27 28 25.5 7,
245 27.5 34.5 35.5 27.5 11,259 34 36 39 30.5 9,267 35.5 30.5,271 31 31.5 32 31,274 32 32 32.5 31.5,277 32 30 32 29.5,281 30.5 30 31 30,284 30 30.5,288 30 30 30.5 28.5,291 29.5 28.5,295 29 30,298 30 29.5,301 29.5 29.5,305 29 29,308 29.5 30,315 30 30 30 29.5,319 30 30,322 30.5 30,325 30 30.5,329 30.5 31 31 30.5 4,332 31 30.5 31 30,336 30.5 30.5 31 30,339 30.5 29.5,342 29.5 28.5,346 28.5 27 28.5 26.5,349 26 26.5,353 26.5 26.5,356 26.5 27.5 28 26.5,360 27.5 27.5,363 27.5 27.5 28 27.5,367 27.5 27.5 28 27.5,370 28 28,373 28 28.5,377 28.5 29 29.5 28.5,381 29 29,384 29 29,389 29 28.5 29 28 6,394 28 28.5,397 28.5 29,401 28.5 28 29 28,404 28.5 27.5,407 27.5 27 27.5 26.5,413 27 27.5 27.5 26.5 6,419 27 26.5 27 26.5 5,422 26.5 27,426 27.5 27.5,429 27.5 27,431 27 27.5,435 28 27.5,438 28 28 28.5 28,442 28 28,445 28 27.5,449 27 27,453 27 27.5,456 27.5 27,459 26.5 27,
462 27 26.5 27 26,467 26.5 26 27 25.5,472 26 26 26.5 26,479 26 26 26.5 26,483 26.5 26.5,486 27 27 27 26.5,493 27.5 27.5 27.5 27,498 27.5 27.5,503 27.5 27.5 28 27.5,507 28 28.5 28.5 27.5,512 28 28,518 27.5 27.5 27.5 27,524 27 27,527 26.5 27,531 27 29,534 29 29.5,538 29 28.5,542 28 28 28 27.5,545 27.5 27.5 27.5 27,548 28 28,551 27.5 27 28 27,555 26.5 26.5 27 26.5,558 26.5 26,562 26 26 26 25,565 26.5 26.5,569 26 26,572 26.5 27,575 26.5 26,579 26 26 26.5 26,582 26 26.5,586 26 26 26.5 26,589 26 26,593 26 26.5 26.5 25.5,596 26 25.5,599 26 26 26 25.5,603 26 26,606 26 25,612 25.5 24.5 25.5 24.5 5,618 24.5 24.5 25 24,621 25 26.5,624 26 25,626 25 24.5 25 24.5 5,631 24.5 24.5 24.5 24,634 24 24.5,639 24 24.5,642 24.5 24.5 24.5 24,645 24.5 25.5 25.5 24,648 25.5 25 25.5 24.5,651 24.5 24.5,655 24 24.5,658 24.5 25 25.5 24.5,663 25 25,667 25.5 25.5,672 25 25.5,675 25.5 25.5 25.5 25,679 25 26 26 24.5,682 25.5 25,687 25 25 25 24.5,690 24.5 25,693 25 26.5,696 26 26.5,700 26 26,703 25.5 26.5,706 26 25.5,711 25.5 25.5 26 25,714 25.5 25.5 26 25.5,717 25.5 25,721 25.5 25.5 25.5 25,723 25.5 24.5,727 24 24.5,730 24 24 24.5 24,733 24 24 24.5 24,738 24.5 24,741 24 24.5,745 24 23.5,748 23.5 23.5 24 23.5,751 24 23.5,754 24 23.5 24.5 23.5,757 24.5 25,762 24.5 24.5 24.5 24,765 24.5 24.5,769 24 24.5,772 24.5 24.5 24.5 24,775 24 24.5,778 24.5 24,781 24 24,786 23.5 23.5 24 23.5,789 24 23.5,793 24 23.5,796 23.5 23.5,798 23 23.5,802 23 23 23.5 23,805 23 23,809 23.5 23.5 24 23.5,813 24 24 24 23.5,817 23.5 24 25 23.5,820 23.5 23 24 23,823 23 23,826 23 23 23 22.5,829 23 23.5,833 23.5 23,837 23 23,840 23 23,844 23 23.5 24 23,846 23 24,850 23.5 23,853 23 23 23.5 23,857 23.5 23,860 23 23 23.5 23,864 23 23.5,868 24 24.5,871 25 24.5,874 24.5 25 25 24,877 24.5 24.5,882 25 24.5 25.5 24.5 5,888 25 25.5,892 25.5 24.5,895 24.5 25.5,901 25 25.5 26 25,905 26 26 26.5 26,909 26 26 26 24,915 25.5 24.5,918 25 25,922 24.5 25.5,924 25.5 25.5 26 25.5,928 25.5 25 25.5 24.5,931 24.5 25.5,935 26 26,939 26 26 26 25,942 25 25 25 24.5,946 24.5 23.5,949 24 24,952 24 24.5,955 25 24,959 24 24,964 24 24.5 24.5 24 6,970 24.5 24.5 24.5 24,973 24 24 24.5 24,977 23.5 24,980 24 23.5,982 23.5 24 24 23,987 24 24 24.5 24,990 24 24.5,995 24.5 24.5,999 24 24,1003 24 24 24.5 23.5,1006 24.5 24 25 24,1011 24 25,1014 24.5 25,1018 25 25.5,1021 25 25,1024 25 24.5,1027 25 25.5,1030 25.5 26 26.5 25.5,1035 26.5 26.5,1041 26.5 27 27.5 26.5,1045 27 26.5 27.5 26.5,1050 26.5 26.5,1054 27 28,1059 28 28 28.5 28,1063 28 28,1069 28.5 29,1072 29 29,1075 29.5 29,1078 29 29 29.5 29,1082 28.5 28 28.5 27.5,1086 27.5 27.5 27.5 27,1089 27 27.5,1093 27.5 27,1096 27.5 28 28.5 27.5,1101 28 28,1108 28 27.5 28 27.5 6,1113 27.5 27.5 28 27.5,1117 27.5 27,1120 27.5 27.5 27.5 27,1125 28 28,1126 28 28.5,1129 29 29,
1141 28.5 24 28.5 22 13,1150 24 29 29 23.5,1155 28.5 28 29.5 28,1159 27.5 28 28 27,1163 28.5 27 28.5 26,1167 26.5 26 27 25.5,1170 26.5 27.5 27.5 26,1173 27 27.5,1178 28 29.5 30 27.5 5,1184 29.5 29.5 30 29.5,1188 29.5 28,1191 28.5 30,1195 30 30,1198 30 30 30.5 30,1201 30.5 29.5,1204 30 29.5,1208 29.5 29.5 30 29.5,1212 29.5 29,1215 29 29.5,1219 30 30.5,1225 30.5 31 31 30,1228 31 31,1232 30.5 31,1235 31 31,1239 31 30.5,1243 30.5 29.5 31 29.5,1246 29.5 29.5 30 29.5,1249 29.5 29,1252 29.5 29.5 29.5 29,1255 29.5 29,1260 29 29,1262 29 28.5,1268 28.5 28 28.5 28 5,1275 28 29.5 30 28 5,
1284 29.5 35.5 36.5 29.5 9,1293 35 32.5 35.5 31,1297 32.5 32.5 33 31.5,1301 32 31.5 33 31.5,1303 32 32.5 32.5 30,1307 32 33 33.5 32,1311 33 33 34 33,1313 32.5 32,1317 31.5 31.5 32 30.5,1320 31.5 31.5 33 31.5,1325 32 32.5 32.5 31.5,1328 32.5 31.5,1333 31 31,1338 31.5 31.5 31.5 31,1342 32 32.5,1344 32 33,1348 32.5 32.5 32.5 31.5,1351 32.5 33.5,1356 33 32.5,1358 32 32 33 32,1361 32 32.5 33 32,1366 33 33 33 32,1369 33.5 32.5 34 32.5,1372 33 32.5,1376 32.5 32.5,1380 32.5 33,1383 33 32,1386 31.5 31.5,1390 31 32.5,1397 32.5 32 33 31.5,1400 31.5 31,1404 31 31,1409 31.5 30.5,1416 31.5 31.5,1419 31 31,1424 31 30.5,1427 31.5 31.5 31.5 31,1432 31 31.5 31.5 31 5,1434 31.5 32,1438 32 31.5,1441 31.5 31.5 32 31.5,1448 31 31,1450 31.5 31.5 31.5 31,1454 31.5 31.5,1458 31.5 31,1461 31 30.5,1467 31 32,1471 32 32,1475 31.5 31.5,1478 31 31,1481 31 30 31.5 30,1485 30 30 30.5 30,1488 30 30.5,1492 31 31,1496 30.5 31,1499 31 32.5,1503 33 34,1505 34 35,1509 35 35,1513 35 34.5 35 34,1517 34 33,1523 33 33,1528 33.5 34,1531 33.5 33.5 34 33.5,1535 33 33,1538 33 33.5,1541 33 34,1546 33.5 33 33.5 32.5 5,1552 33 32.5,1555 33 33.5,1559 33 32.5,1563 32 31 32 30.5,1565 31 31.5,1572 31.5 31,1577 31 31,1580 31.5 31.5 32 31.5,1582 31.5 31.5 32 31,1586 31.5 31.5,1589 32 33,1593 33 33,1597 33 32.5,1600 33 33 33.5 32.5,1604 33 33,1609 33 34.5 34.5 32 5,1614 34.5 34.5 35 34,1619 34 34.5,1622 34.5 33.5,1624 33 32.5,1628 33 33 33 32.5,1632 33 32 33.5 32,1636 31.5 31,1639 31 31 31 30.5,1643 31 31.5,1646 31 31 31 30,1649 30.5 30,1652 30 29,1655 29 30,1660 29.5 28.5,1663 28 28.5 29 28,1665 29 29.5,1670 29.5 30 30.5 29.5,1673 30 30 30.5 30,1676 30.5 31.5,1679 31 31.5,1683 31 30.5 31.5 30.5,1686 31 30.5,1690 30.5 30.5,1693 30.5 30,1697 29.5 29.5 30 29.5,1701 30 29 30.5 29,1704 29.5 30 30 28.5,1707 29.5 29.5 29.5 29,1710 29.5 29.5 30 29,1714 29 29.5,1718 29.5 29,1721 29 29 29.5 29,1724 29 29 29.5 28.5,1727 29 29.5,1732 29 29 29 28.5,1734 29 28.5,1738 28.5 28,1741 28 28 28.5 28,1745 27.5 27.5,1748 27.5 27 28 27,1751 27 27 27 25.5,1755 27 27.5 27.5 26.5,1759 27 26.5 27 26,1761 26.5 25,1765 25 25.5,1768 25.5 26 26.5 25.5,1772 25.5 25.5,1775 25 25 25.5 25,1779 25 24.5,1783 24.5 23,1785 23 24.5,1789 24 23.5,1793 23 23 23 22.5,1796 22.5 23,1800 23 23 23.5 23,1802 22.5 22.5 23 22,1807 22 22.5,1810 22.5 22.5 23 22.5,1814 23 22.5 23.5 22.5,1816 22.5 23,1819 23 23 23 22.5,1824 23 22.5 23 22,1827 22 22 22.5 22,1830 22 22 22.5 22,1833 22 22.5,1837 22 22.5,1840 23 22,1843 22 22.5,1847 22.5 23.5 24 22.5,1851 23 22,1855 22 22 22.5 22,1858 21.5 21.5,1862 21.5 22,1865 22.5 22.5 22.5 22,1870 23 23.5 24 23,1872 23.5 23,1876 23 22.5,1879 22.5 24,1883 24 24.5,1886 24 25,1890 24.5 24 25 24,1893 24 25,1897 25 25 25 24.5,1899 25 25 25.5 24.5,1903 25 24.5,1907 25 25 26 24.5,1911 25.5 26 26.5 25.5,1914 25.5 26 26 25.5 8,1920 25.5 25.5 26 25.5,1924 26 26 26.5 26,1928 25.5 25.5,1931 26 25.5,1934 25.5 25 25.5 24.5,1937 24.5 24.5,1940 24.5 25.5 26 24.5,1944 26 26 26 25,1948 25 25 26 25,1952 24.5 25.5,1954 25.5 26 26 25,1958 26 26 26.5 26,1961 26 26 26.5 25.5,1965 25.5 26,1968 25.5 26,1972 26 26 26 25.5,1975 25.5 26.5,1979 26.5 26.5,1982 26.5 28.5,1985 28.5 28.5,1989 28.5 28 29 28,1992 28 28.5,1995 28 28 28.5 28,1999 28 28 28.5 28,2003 28 28.5 28.5 27.5,2005 28.5 27,2009 27 27.5 28 27,2012 27.5 27 28 27,2016 27 27 27.5 26,2020 26 27,2023 26.5 26.5 27 26,2027 26 28,2030 27 28 28.5 27,2034 27.5 27.5 28.5 27,2037 28 29 29.5 27.5,2040 30 28 31 27.5,2060 30 30 30 30 27,
2090 37 32.5 40.5 28 19,2106 32 30 36 27.5 5,2113 30.5 23.5 31.5 22.5 5,2119 23.5 22 26.5 21.5,2124 21.5 24.5 26.5 20.5,2133 24.5 21 25 19 9,2141 20 21.5,2145 21 18 21.5 17,2152 17 15 18 14 5,2157 15.5 18.5 19 15.5,2161 18 19 19 16,2164 19 23 23.5 19,2168 23.5 24 28 23.5,2171 23 24 24.5 22,2175 24 24.5 25 23.5,2178 25 26 28.5 25,2181 26.5 25.5 27.5 24.5,2185 25 29,2188 29 28.5 29.5 28,2192 29 29 29.5 27.5,2195 29 28.5 31.5 28.5,2198 28.5 33.5 33.5 27.5,2202 34 32 34.5 32,2205 32 31 35 31,2209 30.5 33.5 33.5 29.5,2214 33 36.5 36.5 33 5,2219 35 35 35 32.5,2222 34.5 34 36 34,2226 34 37.5,2229 37.5 35,2233 35 34.5 36.5 34,2238 35 35.5 36 34 5,2251 36 33 36.5 32 13,2261 32 32 32 30,2264 31 26.5,2268 26 26.5 27 26`;

const candles = raw.split(',').map(s => {
    const [x, o, c, h, l, w] = s.trim().split(' ').map(Number);
    return { x, o, c, h: h ?? Math.max(o, c), l: l ?? Math.min(o, c), w: w ?? 3 };
});

const add = (tag, attrs) => {
    const el = document.createElementNS(NS, tag);
    Object.entries(attrs).forEach(([k, v]) => el.setAttribute(k, v));
    canvas.appendChild(el);
    return el;
};
const rect = (x, y, width, height, fill, opacity = 1) => add('rect', { x, y, width, height, fill, opacity });
const path = (d, stroke, width = 1, dash = '') => add('path', { d, stroke, fill: 'none', 'stroke-width': width, 'stroke-dasharray': dash });

// 背景ゾーン
rect(58, 82, 2032, 792, '#0c0203');
rect(2090, 230, 361, 899, '#0c0203');
for (let p = 9; p <= 44; p++) rect(58, Math.round(py(p)), 2393, 1, '#fff', 0.05);
path('M2077.500 82V1329', '#6b5a1e', 1, '1 3');

// 出来高
candles.forEach((k, i) => rect(k.x - 2, 1329 - (1 + i * 7 % 3), 3, 3, i % 3 ? '#0f2157' : '#26313f'));
[[226, 11, 4, 0], [240, 12, 10, 1], [254, 11, 8, 1], [610, 5, 4, 0], [1131, 16, 15, 0], [1279, 10, 8, 1], [1178, 5, 4, 1],
 [2043, 33, 312, 1], [2079, 23, 58, 0], [2104, 5, 4, 0], [2111, 5, 3, 0], [2127, 11, 8, 0], [2148, 6, 4, 0], [2238, 6, 4, 1], [2243, 15, 15, 0]]
    .forEach(([x, w, h, blue]) => rect(x, 1329 - h, w, h, blue ? '#0f2157' : '#26313f'));
path('M58 1327.500H236L262 1325H290L310 1327.500H1140L1170 1325.500H1200L1220 1327.500H2040L2060 1301L2090 1297L2161 1295.500L2165 1325L2270 1327', '#5c5a1c', 1, '1 3');

// 週足始値
candles.forEach(k => add('circle', { cx: k.x + 0.5, cy: 1026.5, r: 2.5, fill: k.x === 2060 ? '#8f9fd8' : '#aeaaaa' }));

// 水平線
path('M58 315.500H1274', '#b0242f');
path('M58 332.500H438', '#a98136');
path('M58 840H2060', '#00bcd4', 2);
path('M2061 585.500H2451', '#1aa3c0', 2);
path('M2091 349H2451', '#c87a30', 2);

// ローソク足
candles.forEach(k => {
    const color = k.o > k.c ? '#f63546' : '#16937c';
    const y0 = Math.round(py(Math.max(k.o, k.c)));
    const y1 = Math.round(py(Math.min(k.o, k.c)));
    if (k.h !== k.l) rect(k.x, Math.round(py(k.h)), 1, py(k.l) - py(k.h), color);
    const w = y0 === y1 ? Math.max(5, k.w) : k.w;
    rect(k.x - Math.floor(w / 2), y0, w, y1 - y0 + 1, color);
});
rect(58, 82, 2032, 504, '#f23645', 0.1);
rect(2090, 349, 361, 355, '#f23645', 0.1);

path('M58 577.500H2077M2077 442.500H2270', '#a98a50', 1, '5 6');
path('M58 586.500H2451', '#fbb22d', 3, '3 9');
path('M58 705.500H2451', '#f23645');

// VWAP
const vwap = [[491, 82], [524, 83], [540, 86], [570, 89], [606, 91], [612, 95], [628, 97], [658, 99], [686, 101], [713, 103], [735, 106], [757, 108], [784, 110], [809, 112], [820, 116], [858, 118], [882, 121], [904, 122], [915, 126], [970, 130], [1003, 133], [1079, 140], [1129, 142], [1141, 157], [1150, 159], [1178, 164], [1275, 171], [1284, 174], [1313, 177], [1517, 185], [1608, 189], [1731, 195], [1836, 208], [1900, 214], [2040, 228], [2060, 340], [2106, 466], [2113, 476], [2119, 485], [2124, 492], [2133, 528], [2141, 531], [2145, 543], [2152, 560], [2157, 564], [2161, 570], [2164, 573], [2168, 575], [2175, 579], [2185, 583], [2195, 585], [2202, 582], [2209, 581], [2214, 577], [2222, 575], [2226, 572], [2233, 570], [2238, 566], [2251, 553], [2261, 552], [2268, 553]];
candles.filter(k => k.x > 491 && k.x !== 2090).forEach(k => {
    const i = vwap.findIndex(v => v[0] >= k.x);
    const [x1, y1] = vwap[i];
    const [x0, y0] = vwap[i - 1];
    const y = Math.round(y0 + (y1 - y0) * (k.x - x0) / (x1 - x0));
    rect(k.x - 1, y, 3, 1, '#4a5ce8');
    rect(k.x, y - 1, 1, 3, '#4a5ce8');
});

// 売りマーク
path('M2264.500 532V543M2259 538L2264.500 544L2270 538', '#f23645', 2);

// クロスヘア
path('M710.500 82V1329M58 1087.500H2451', '#7d8594', 1, '5 6');

const label = (parent, cls, text, style) => {
    const el = document.createElement('span');
    el.className = cls;
    el.textContent = text;
    Object.assign(el.style, style);
    parent.appendChild(el);
    return el;
};
const atY = y => ({ top: (y - VIEW.y) / VIEW.h * 100 + '%' });
const atX = x => ({ left: (x - VIEW.x) / VIEW.w * 100 + '%' });

// 価格軸
const prices = document.getElementById('prices');
for (let p = 44; p >= 9; p--) {
    if (![31, 30, 17, 15].includes(p)) label(prices, 'price', `2,8${String(p).padStart(2, '0')}.0`, atY(py(p)));
}
[['cyan', '2,842.5', 162], ['blue', '2,831.0', 553], ['amber', '2,830.0', 586], ['red', '2,826.5', 704], ['white', '2,817.0', 1026], ['gray', '2,815.0', 1087], ['yellow', '48.36 K', 1327]]
    .forEach(([c, t, y]) => label(prices, `tag tag-${c}`, t, atY(y)));
label(plot, 'side side-vwap', 'VWAP', atY(553));
label(plot, 'side side-week', 'week :w_op', atY(1026));
label(plot, 'side side-vol', 'Volume MA', atY(1327));
label(plot, 'side side-add', '', atY(1087)).innerHTML = '<svg class="ic18" viewBox="4 4 20 20"><use href="#i-pluscircle" width="28" height="28"/></svg>';
label(plot, 'level level-high', '1230', { ...atY(317), ...atX(1274) });
label(plot, 'level level-low', '1530', { ...atY(842), ...atX(2060) });

// 時間軸
const times = document.getElementById('times');
[['13:05', 65], ['13:10', 136], ['13:15', 204], ['13:20', 301], ['13:25', 370], ['13:30', 438], ['13:35', 507], ['13:40', 575], ['13:45', 643], ['13:55', 774], ['14:00', 843], ['14:05', 914], ['14:10', 983], ['14:15', 1051], ['14:20', 1119], ['14:25', 1208], ['14:30', 1274], ['14:35', 1347], ['14:40', 1423], ['14:45', 1488], ['14:50', 1560], ['14:55', 1626], ['15:00', 1700], ['15:05', 1768], ['15:10', 1836], ['15:15', 1907], ['15:20', 1975], ['10', 2090], ['09:05', 2195], ['09:10', 2287], ['09:15', 2368], ['09:19', 2432]]
    .forEach(([t, x]) => label(times, 'time', t, atX(x)));
label(times, 'time-cursor', '6月 09 (火)   13:50:15', atX(710));

// タブ: コード, 騰落率, ロゴ文字 (# はアイコン), 背景, 文字色
const tabs = [
    ['6857', '−3.4', 'A', '#f0f3fa', '#8c1d40'], ['9984', '−6.3', '#i-9984'], ['4568', '−3.5', '#i-4568'],
    ['6963', '−2.9', 'ROHM', '#d7000f', '#fff'], ['5803', '−3.0', 'F', '#f0f3fa', '#0071bc'], ['7974', '−6.6', 'N', '#e60012', '#fff'],
    ['7203', '−0.1', '#i-toyota'], ['285A', '−2', 'K', '#f0f3fa', '#000'], ['6762', '−1', '⊕TDK', '#0046ad', '#fff'],
    ['1321', '−0', '#i-1321'], ['6981', '−2', 'm', '#e4153e', '#fff'], ['6976', '−2', 'TY', '#f0f3fa', '#d8282f'],
    ['9831', '+2', '#i-9831'], ['3687', '−4', '#i-3687'], ['4392', '−1', 'G', '#f0f3fa', '#3aa0c8'],
    ['6976', '−2', 'TY', '#f0f3fa', '#d8282f'], ['6762', '−1', '⊕TDK', '#0046ad', '#fff'], ['8802', '+2', '#i-8802']
];
document.getElementById('tabs').innerHTML = tabs.map(([code, pct, mark, bg, fg], i) => {
    const up = pct[0] === '+' ? ' up' : '';
    const logo = mark[0] === '#'
        ? `<svg class="ic18"><use href="${mark}"/></svg>`
        : `<span class="logo${mark.length > 2 ? ' small' : ''}" style="background:${bg};color:${fg}">${mark}</span>`;
    const close = i > 6 ? '<button aria-label="閉じる"><svg class="ic10"><use href="#i-x"/></svg></button>' : '';
    return `<a href="#" class="tab${i === 6 ? ' current' : ''}">${logo}<span class="code">${code}</span><span class="arrow${up}">${up ? '▲' : '▼'}</span><span class="pct${up}">${pct}</span>${close}</a>`;
}).join('');
```
